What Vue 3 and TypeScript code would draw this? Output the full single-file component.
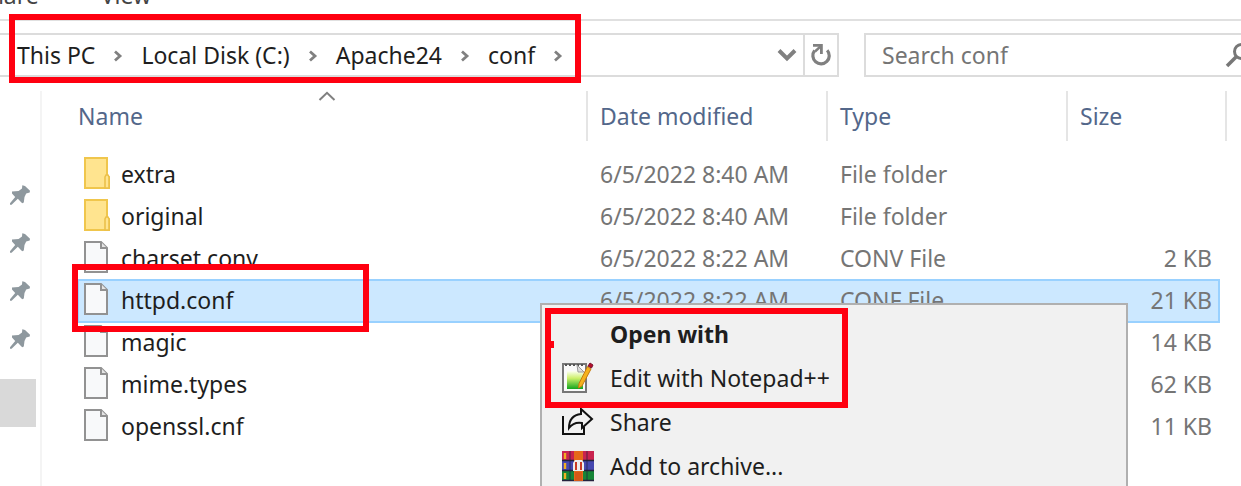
<script setup lang="ts">
import { ref } from 'vue'

interface Entry {
  name: string
  modified?: string
  type?: string
  size?: string
  folder?: boolean
}

const crumbs: string[] = ['This PC', 'Local Disk (C:)', 'Apache24', 'conf']
const pins: number[] = [1, 2, 3, 4]
const entries: Entry[] = [
  { name: 'extra', modified: '6/5/2022 8:40 AM', type: 'File folder', folder: true },
  { name: 'original', modified: '6/5/2022 8:40 AM', type: 'File folder', folder: true },
  { name: 'charset.conv', modified: '6/5/2022 8:22 AM', type: 'CONV File', size: '2 KB' },
  { name: 'httpd.conf', modified: '6/5/2022 8:22 AM', type: 'CONF File', size: '21 KB' },
  { name: 'magic', size: '14 KB' },
  { name: 'mime.types', size: '62 KB' },
  { name: 'openssl.cnf', size: '11 KB' },
]
const selected = ref('httpd.conf')
const query = ref('')
</script>

<template>
  <div class="window">
    <div class="ribbon">
      <button class="tab">Share</button>
      <button class="tab">View</button>
    </div>

    <div class="toolbar">
      <nav class="address" aria-label="Path">
        <template v-for="c in crumbs" :key="c">
          <a class="crumb" href="#">{{ c }}</a>
          <svg class="sep" viewBox="0 0 10 12" aria-hidden="true"><path d="M2 1.5 7 6 2 10.5" fill="none" stroke="#808080" stroke-width="2.8" /></svg>
        </template>
        <button class="history" aria-label="Previous locations">
          <svg width="20" height="14" viewBox="0 0 20 14"><path d="M2 2.5 10 10.5 18 2.5" fill="none" stroke="#808080" stroke-width="4" /></svg>
        </button>
        <button class="refresh" aria-label="Refresh">
          <svg width="22" height="24" viewBox="0 0 22 24">
            <path d="M4.6 7.6A8.2 8.2 0 1 0 17.2 7.2" fill="none" stroke="#808080" stroke-width="3.2" />
            <path d="M3 2.4H11.4V11" fill="none" stroke="#808080" stroke-width="2.8" />
            <path d="M5 8.5 11 3" stroke="#808080" stroke-width="2.4" />
          </svg>
        </button>
      </nav>
      <div class="search">
        <input v-model="query" type="search" placeholder="Search conf" aria-label="Search conf" />
        <svg width="26" height="26" viewBox="0 0 26 26" aria-hidden="true">
          <circle cx="16.5" cy="9.5" r="7" fill="none" stroke="#777" stroke-width="3" />
          <path d="M11.5 14.5 2 24" stroke="#777" stroke-width="3.6" />
        </svg>
      </div>
    </div>

    <div class="body">
      <aside class="side">
        <div v-for="p in pins" :key="p" class="pin">
          <svg width="20" height="20" viewBox="0 0 20 20" aria-hidden="true">
            <path d="M12.3 .3 15 1 20 5.8 19.7 7.6 16.2 8.6 14.5 12 13.8 17.6 12.2 18.2 7.8 13.8 1.6 19.8 0 19.8V18.3L5.2 12 2 8.6V6.6L8.6 6 12 3.4Z" fill="#8e989e" />
          </svg>
        </div>
        <div class="current"></div>
      </aside>

      <main class="files">
        <table>
          <colgroup><col /><col class="wide" /><col class="wide" /><col class="narrow" /></colgroup>
          <thead>
            <tr>
              <th scope="col">
                Name
                <svg class="sort" width="18" height="10" viewBox="0 0 18 10" aria-hidden="true"><path d="M1.5 9 9 1.8 16.5 9" fill="none" stroke="#808080" stroke-width="2" /></svg>
              </th>
              <th scope="col">Date modified</th>
              <th scope="col">Type</th>
              <th scope="col">Size</th>
            </tr>
          </thead>
          <tbody>
            <tr v-for="e in entries" :key="e.name" :class="{ selected: e.name === selected }" @click="selected = e.name">
              <td>
                <span class="entry">
                  <svg v-if="e.folder" width="26" height="32" viewBox="0 0 26 32" aria-hidden="true">
                    <path d="M1 1H23V19L25 20V31H1Z" fill="#ffe48f" stroke="#f0c64c" stroke-width="2" />
                    <path d="M21 31V20L22 18H24L25 20V31Z" fill="#ffe48f" stroke="#ecc04a" stroke-width="1.6" />
                  </svg>
                  <svg v-else width="26" height="32" viewBox="0 0 26 32" aria-hidden="true">
                    <path d="M1 1H17L23 7V31H1Z" fill="#f8f9fa" stroke="#929292" stroke-width="2" />
                    <path d="M17 1V7H23" fill="#e4e4e4" stroke="#929292" stroke-width="2" />
                  </svg>
                  {{ e.name }}
                </span>
              </td>
              <td>{{ e.modified }}</td>
              <td>{{ e.type }}</td>
              <td class="size">{{ e.size }}</td>
            </tr>
          </tbody>
        </table>
      </main>
    </div>

    <div class="menu" role="menu">
      <button class="default" role="menuitem"><span class="icon"></span>Open with</button>
      <button role="menuitem">
        <span class="icon">
          <svg width="32" height="32" viewBox="0 0 32 32">
            <defs>
              <linearGradient id="page" x1="0" y1="0" x2="0" y2="1">
                <stop offset="0" stop-color="#fdfff4" /><stop offset=".4" stop-color="#cdf06b" /><stop offset="1" stop-color="#12a51e" />
              </linearGradient>
            </defs>
            <path d="M1 2H24V30H1Z" fill="#fafafa" stroke="#777" stroke-width="2" />
            <path d="M3 3H22" stroke="#555" stroke-width="2" stroke-dasharray="2 2" />
            <path d="M5 9H21V27H5Z" fill="url(#page)" />
            <path d="M15 3 22 10H16Z" fill="#ddd" stroke="#999" />
            <path d="M25.5 4.5 29 7 20 24 16.5 26 17 21.5Z" fill="#f5b21c" stroke="#c57a12" />
            <path d="M26 4 28 1 31 3 29.5 6Z" fill="#b50c2b" stroke="#7c1530" />
          </svg>
        </span>Edit with Notepad++
      </button>
      <button role="menuitem">
        <span class="icon">
          <svg width="32" height="32" viewBox="0 0 32 32" fill="none" stroke="#111" stroke-width="2">
            <path d="M1 10V28H22V21" />
            <path d="M19 3 30 13 20 22V17C14 16 10 18 7 22C7 14 11 9 19 8Z" />
          </svg>
        </span>Share
      </button>
      <button role="menuitem">
        <span class="icon">
          <svg width="32" height="32" viewBox="0 0 32 32">
            <path d="M0 1H32V11H0Z" fill="#c9234f" /><path d="M0 11H32V21H0Z" fill="#4648b0" /><path d="M0 21H32V31H0Z" fill="#168536" />
            <path d="M0 10.5H32M0 20.5H32M0 30.5H32" stroke="#25223d" stroke-width="1.4" />
            <path d="M3 3V9M3 13V19M3 23V29" stroke="#f1ae22" stroke-width="2.4" />
            <path d="M8 1V31M25 1V31" stroke="#202040" stroke-opacity=".35" stroke-width="2" />
            <path d="M12 1H21V31H12Z" fill="#e56a1a" />
            <path d="M11 13 13 10H20L22 13V21H11Z" fill="#eee" />
            <path d="M14 20V12M19 20V12" stroke="#cb3a26" stroke-width="2" />
            <path d="M13 22H20V31H13Z" fill="#d65816" />
          </svg>
        </span>Add to archive...
      </button>
    </div>

    <div class="mark path"></div>
    <div class="mark file"></div>
    <div class="mark action"></div>
    <div class="speck"></div>
  </div>
</template>

<style>
body {
  margin: 0;
  background: #fff;
}
</style>

<style scoped>
.window {
  position: relative;
  height: 100vh;
  display: flex;
  flex-direction: column;
  overflow: hidden;
  background: #fff;
  color: #1e1e1e;
  font: 23px/32px "Noto Sans", "Open Sans", sans-serif;
}
button {
  padding: 0;
  border: 0;
  background: none;
  color: inherit;
  font: inherit;
}
svg {
  display: block;
  flex: none;
}
.ribbon {
  display: flex;
  align-items: flex-end;
  gap: 62px;
  box-sizing: border-box;
  height: 21px;
  margin-left: -23px;
  padding-bottom: 8px;
  border-bottom: 2px solid #e0e0e0;
  overflow: hidden;
  color: #444;
}
.toolbar {
  display: grid;
  grid-template-columns: 843fr 392fr;
  gap: 25px;
  margin: 12px -15px 14px -4px;
}
.address,
.search {
  display: flex;
  align-items: center;
  box-sizing: border-box;
  height: 44px;
  border: 2px solid #dcdcdc;
}
.address {
  padding-left: 19px;
}
.crumb {
  color: inherit;
  text-decoration: none;
  white-space: nowrap;
}
.sep {
  width: 10px;
  height: 12px;
  margin: 2px 18px 0;
}
.history {
  margin: 0 6px 0 auto;
}
.refresh {
  display: flex;
  align-items: center;
  justify-content: center;
  align-self: stretch;
  width: 34px;
  border-left: 2px solid #dcdcdc;
}
.search {
  padding: 0 3px 0 16px;
}
.search input {
  flex: 1;
  min-width: 0;
  padding: 0;
  border: 0;
  outline: 0;
  background: none;
  color: #444;
  font: inherit;
}
.search input::placeholder {
  color: #757575;
  opacity: 1;
}
.body {
  flex: 1;
  display: flex;
}
.side {
  box-sizing: border-box;
  width: 42px;
  padding-top: 80px;
  border-right: 2px solid #f4f4f4;
}
.pin {
  display: flex;
  align-items: center;
  height: 48px;
  padding-left: 10px;
}
.current {
  width: 36px;
  height: 48px;
  margin-top: 16px;
  background: #d9d9d9;
}
.files {
  flex: 1;
  padding: 0 22px 0 36px;
}
table {
  width: 100%;
  table-layout: fixed;
  border-spacing: 0;
}
.wide {
  width: 240px;
}
.narrow {
  width: 151px;
}
th {
  position: relative;
  box-sizing: border-box;
  height: 50px;
  padding: 0 0 0 12px;
  color: #53678a;
  font-weight: 400;
  text-align: left;
}
th:first-child {
  padding-left: 0;
}
th::after {
  content: "";
  position: absolute;
  top: 0;
  right: 0;
  width: 2px;
  height: 50px;
  background: #e5e5e5;
}
th:last-child::after {
  right: -8px;
}
.sort {
  position: absolute;
  top: 0;
  left: calc(50% - 15px);
}
tbody::before {
  content: "";
  display: block;
  height: 13px;
}
td {
  box-sizing: border-box;
  height: 42px;
  padding: 0 0 2px 12px;
  color: #757575;
  white-space: nowrap;
}
td:first-child {
  padding-left: 6px;
  color: #1e1e1e;
}
.entry {
  display: flex;
  align-items: center;
  gap: 11px;
}
.entry svg {
  margin-bottom: 2px;
}
td.size {
  padding-right: 7px;
  text-align: right;
}
.selected {
  background: #cce8ff;
  outline: 2px solid #99d1ff;
  outline-offset: -1px;
}
.menu {
  position: absolute;
  top: 303px;
  left: 540px;
  box-sizing: border-box;
  width: 588px;
  padding: 7px 0 12px;
  border: 2px solid #b0b0b0;
  background: #f1f1f1;
}
.menu button {
  display: flex;
  align-items: center;
  gap: 16px;
  width: 100%;
  height: 44px;
  padding-left: 20px;
  text-align: left;
}
.menu .default {
  font-weight: 700;
}
.icon {
  width: 32px;
}
.mark {
  position: absolute;
  box-sizing: border-box;
  border: 6px solid #ff0010;
  pointer-events: none;
}
.path {
  top: 14px;
  left: 9px;
  width: 572px;
  height: 69px;
}
.file {
  top: 264px;
  left: 72px;
  width: 297px;
  height: 68px;
}
.action {
  top: 308px;
  left: 545px;
  width: 303px;
  height: 100px;
}
.speck {
  position: absolute;
  top: 341px;
  left: 550px;
  width: 4px;
  height: 7px;
  background: #ff0010;
}
</style>
